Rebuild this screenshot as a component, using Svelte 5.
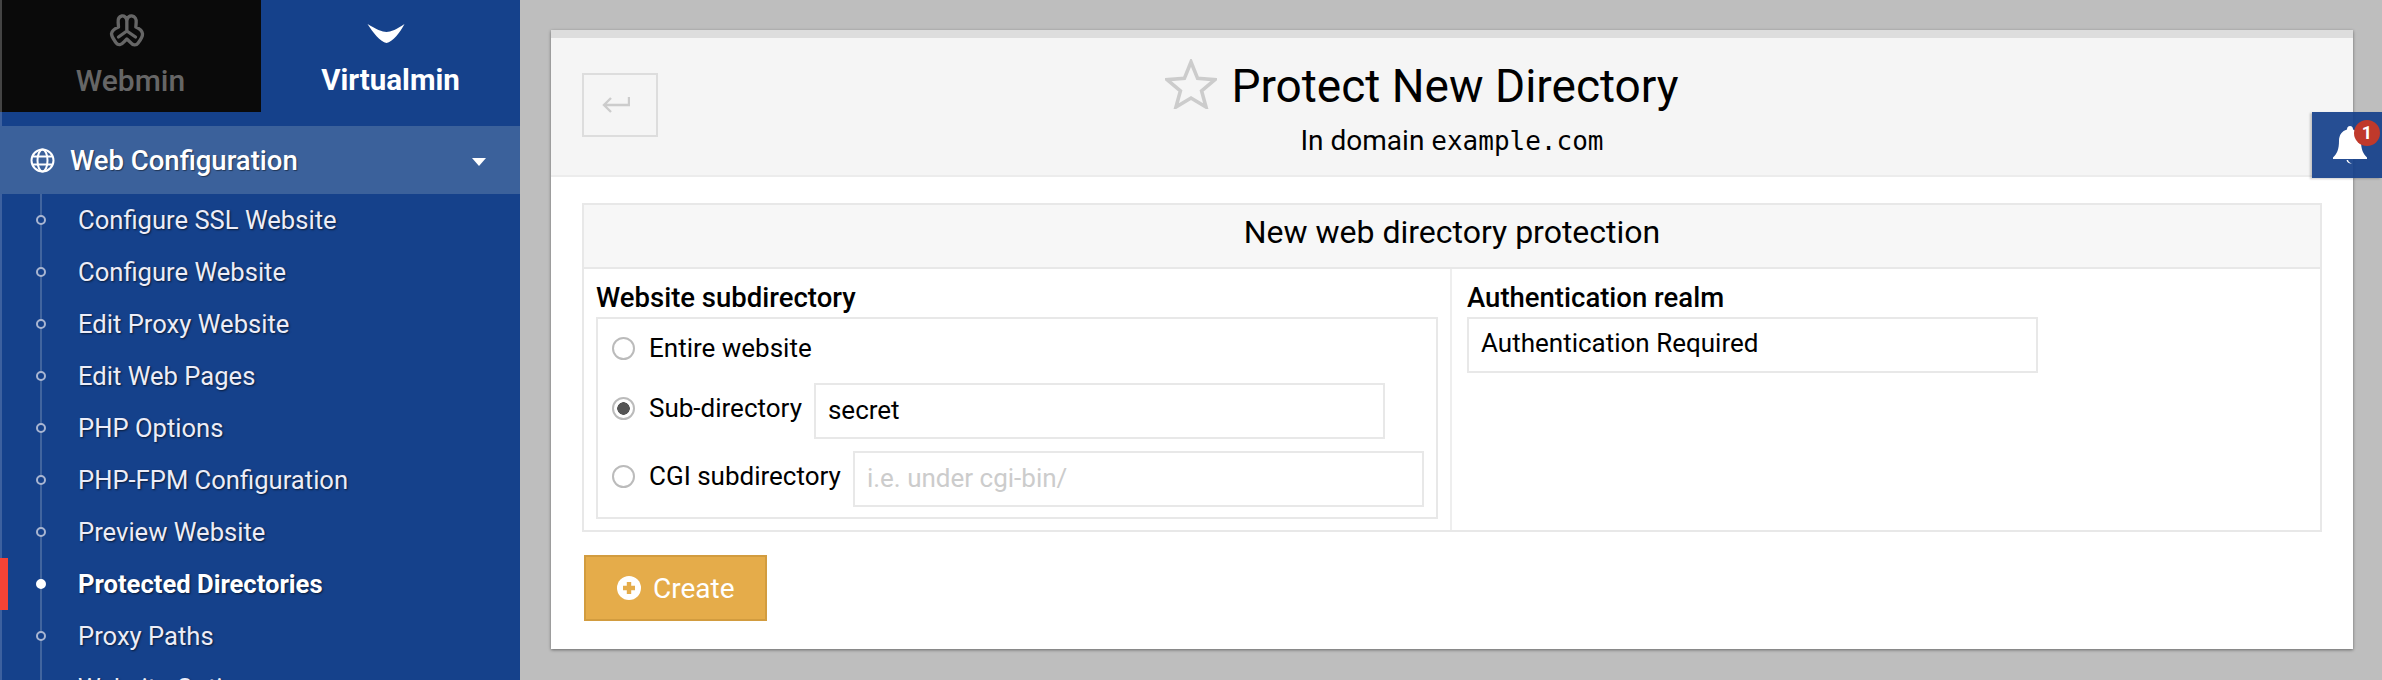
<script>
  let items = [
    'Configure SSL Website',
    'Configure Website',
    'Edit Proxy Website',
    'Edit Web Pages',
    'PHP Options',
    'PHP-FPM Configuration',
    'Preview Website',
    'Protected Directories',
    'Proxy Paths',
    'Website Options'
  ];
  let active = 'Protected Directories';
  let subdir = 'secret';
  let realm = 'Authentication Required';
  let mode = 'sub';
</script>

<div class="page">
  <aside class="sidebar">
    <div class="tabs">
      <div class="tab webmin">
        <svg class="webmin-logo" viewBox="85 40 110 105" fill="none" stroke="currentColor" stroke-width="10" stroke-linejoin="round" stroke-linecap="round">
          <path d="M138 60C134 50 128 48 123 49C114 51 111 58 112 68L113 82C104 86 93 92 92 102C92 112 100 120 106 130C112 138 122 136 128 128L138 118L150 129C156 137 166 138 172 130C178 122 186 112 185 102C184 92 174 86 165 82L166 68C167 58 162 50 154 49C148 48 142 50 138 60Z" />
          <path d="M138 60V94L113 112M138 94L164 112" />
        </svg>
        <span>Webmin</span>
      </div>
      <div class="tab virtualmin">
        <svg class="virtualmin-logo" viewBox="0 0 37 19">
          <path d="M0 0C8 5 15 8 19 8C23 8 30 5 37 0C33 8 25 18 19 19C13 18 5 8 0 0Z" fill="#fff" />
        </svg>
        <span>Virtualmin</span>
      </div>
    </div>

    <div class="section">
      <svg class="globe" viewBox="0 0 25 25" fill="none" stroke="#fff" stroke-width="2">
        <circle cx="12.5" cy="12.5" r="11" />
        <ellipse cx="12.5" cy="12.5" rx="5" ry="11" />
        <path d="M2.5 8.5H22.5M2.5 16.5H22.5" />
      </svg>
      <span class="section-name">Web Configuration</span>
      <span class="caret"></span>
    </div>

    <ul class="menu">
      {#each items as item}
        <li class:active={item === active}>
          <span class="dot"></span>
          <span>{item}</span>
        </li>
      {/each}
    </ul>
  </aside>

  <main class="main">
    <div class="card">
      <header class="card-head">
        <button class="back" aria-label="Back">
          <svg viewBox="0 0 28 18" fill="none" stroke="#ccc" stroke-width="2.4">
            <path d="M27 1V9H2M9 2L2 9L9 16" />
          </svg>
        </button>
        <div class="titles">
          <div class="title-row">
            <svg class="star" viewBox="0 0 52 50" fill="none" stroke="#ccc" stroke-width="3.6" stroke-linejoin="miter">
              <path d="M26 3L32.6 19.4L50 20.6L36.6 32L41 48L26 39L11 48L15.4 32L2 20.6L19.4 19.4Z" />
            </svg>
            <h1>Protect New Directory</h1>
          </div>
          <p class="subtitle">In domain <tt>example.com</tt></p>
        </div>
      </header>

      <div class="card-body">
        <section class="table">
          <div class="table-head">New web directory protection</div>
          <div class="table-row">
            <div class="cell left">
              <h2>Website subdirectory</h2>
              <div class="choices">
                <label class="choice first">
                  <input type="radio" name="dir" value="all" bind:group={mode}>
                  <span>Entire website</span>
                </label>
                <label class="choice">
                  <input class="lift" type="radio" name="dir" value="sub" bind:group={mode}>
                  <span class="lift">Sub-directory</span>
                  <input class="text" type="text" bind:value={subdir}>
                </label>
                <label class="choice">
                  <input class="lift" type="radio" name="dir" value="cgi" bind:group={mode}>
                  <span class="lift">CGI subdirectory</span>
                  <input class="text" type="text" placeholder="i.e. under cgi-bin/">
                </label>
              </div>
            </div>
            <div class="cell right">
              <h2>Authentication realm</h2>
              <input class="text realm" type="text" bind:value={realm}>
            </div>
          </div>
        </section>

        <button class="create">
          <svg viewBox="0 0 24 24">
            <circle cx="12" cy="12" r="12" fill="#fff" />
            <path d="M12 6V18M6 12H18" stroke="#e5ac4a" stroke-width="4.4" />
          </svg>
          Create
        </button>
      </div>
    </div>
  </main>

  <div class="bell">
    <svg viewBox="0 0 34 38">
      <path d="M17 0C19 0 20 1.500 20 3.500C25 5 28 9 28 15C28 23 30 28 34 31.500V33H0V31.500C4 28 6 23 6 15C6 9 9 5 14 3.500C14 1.500 15 0 17 0Z" fill="#fff" />
      <path d="M13.500 34C14 36.500 16 38 19 37.500C17 37 15.500 36 15 34Z" fill="#fff" />
    </svg>
    <span class="badge">1</span>
  </div>
</div>

<style>
  :global(body) {
    margin: 0;
    background: #bebebe;
  }

  .page {
    display: flex;
    position: relative;
    width: 2382px;
    height: 680px;
    overflow: hidden;
    font-family: Roboto, sans-serif;
    color: #000;
    background: #bebebe;
  }

  .sidebar {
    flex: 0 0 520px;
    height: 680px;
    overflow: hidden;
    background: #15418b;
    box-shadow: inset 2px 0 0 #3d619f;
    color: #fff;
  }

  .tabs {
    display: flex;
    height: 126px;
  }

  .tab {
    flex: 1;
    display: flex;
    flex-direction: column;
    align-items: center;
    line-height: 33px;
  }

  .webmin {
    height: 112px;
    background: #0a0a0a;
    color: #666;
    border-left: 2px solid #444;
    box-sizing: border-box;
    font-size: 30px;
    font-weight: 500;
  }

  .webmin span {
    margin-top: 16px;
    margin-right: 2px;
  }

  .webmin-logo {
    width: 37px;
    height: 35px;
    margin-top: 13px;
    margin-right: 8px;
  }

  .virtualmin {
    font-size: 29.5px;
    font-weight: 700;
  }

  .virtualmin span {
    margin-top: 21px;
  }

  .virtualmin-logo {
    width: 38px;
    height: 19px;
    margin-top: 24px;
    margin-right: 10px;
  }

  .section {
    display: flex;
    align-items: center;
    height: 68px;
    padding-left: 30px;
    padding-right: 34px;
    background: #3b619b;
    font-size: 27.5px;
    font-weight: 500;
    text-shadow: 1px 1px 1px rgba(0, 0, 0, 0.45);
  }

  .globe {
    width: 25px;
    height: 25px;
    margin-right: 15px;
  }

  .section-name {
    flex: 1;
  }

  .caret {
    width: 0;
    height: 0;
    border-left: 7px solid transparent;
    border-right: 7px solid transparent;
    border-top: 8px solid #fff;
    margin-top: 3px;
  }

  .menu {
    list-style: none;
    margin: 0;
    padding: 0;
    background: linear-gradient(#41659f, #41659f) 40px 0 / 2px 100% no-repeat;
  }

  .menu li {
    display: flex;
    align-items: center;
    height: 52px;
    padding-left: 36px;
    font-size: 25.6px;
    color: #ecedf8;
    text-shadow: 1px 1px 2px rgba(0, 0, 0, 0.6);
  }

  .dot {
    box-sizing: border-box;
    width: 10px;
    height: 10px;
    margin-right: 32px;
    border-radius: 50%;
    border: 2px solid #a9b6d2;
    background: #15418b;
  }

  .menu li.active {
    color: #fff;
    font-weight: 700;
    box-shadow: inset 8px 0 0 #f44336;
  }

  .active .dot {
    background: #fff;
    border-color: #fff;
  }

  .main {
    flex: 1;
    padding: 30px 29px 0 31px;
  }

  .card {
    background: #fff;
    border-top: 8px solid #ddd;
    height: 619px;
    box-sizing: border-box;
    box-shadow: 0 1px 3px rgba(0, 0, 0, 0.45);
  }

  .card-head {
    display: grid;
    grid-template-columns: 76px 1fr 76px;
    height: 139px;
    box-sizing: border-box;
    padding: 35px 31px 0;
    background: #f5f5f5;
    border-bottom: 2px solid #ececec;
  }

  .back {
    width: 76px;
    height: 64px;
    padding: 0 0 0 18px;
    background: transparent;
    border: 2px solid #ddd;
    display: flex;
    align-items: center;
  }

  .back svg {
    width: 28px;
    height: 18px;
  }

  .titles {
    text-align: center;
    margin-top: -21px;
  }

  .title-row {
    display: flex;
    justify-content: center;
    align-items: center;
    height: 68px;
    padding-left: 6px;
  }

  .star {
    width: 52px;
    height: 50px;
    margin-left: -66px;
    margin-right: 14px;
    margin-bottom: 4px;
  }

  h1 {
    margin: 0;
    font-size: 46px;
    font-weight: 400;
    line-height: 60px;
  }

  .subtitle {
    margin: 5px 0 0;
    font-size: 28px;
    line-height: 32px;
  }

  tt {
    font-family: "DejaVu Sans Mono", monospace;
    font-size: 26px;
  }

  .card-body {
    padding: 26px 31px 0;
  }

  .table {
    border: 2px solid #e8e8e8;
  }

  .table-head {
    box-sizing: border-box;
    height: 64px;
    line-height: 55px;
    text-align: center;
    font-size: 32px;
    background: #f7f7f7;
    border-bottom: 2px solid #e8e8e8;
  }

  .table-row {
    display: flex;
    height: 261px;
  }

  .cell {
    box-sizing: border-box;
    padding: 15px 12px 0;
  }

  .left {
    flex: 0 0 868px;
    border-right: 2px solid #eee;
  }

  .right {
    flex: 1;
    padding-left: 15px;
  }

  h2 {
    margin: 0 0 5px;
    font-size: 27.5px;
    font-weight: 500;
    line-height: 28px;
  }

  .choices {
    box-sizing: border-box;
    height: 202px;
    border: 2px solid #e8e8e8;
    padding-left: 14px;
  }

  .choice {
    display: flex;
    align-items: center;
    margin-bottom: 12px;
    font-size: 26px;
  }

  .choice.first {
    height: 52px;
    padding-top: 3px;
    margin-bottom: 9px;
  }

  .lift {
    margin-top: -6px;
  }

  input[type="radio"] {
    appearance: none;
    flex: none;
    box-sizing: border-box;
    width: 23px;
    height: 23px;
    margin-right: 14px;
    margin-left: 0;
    margin-bottom: 0;
    border: 2px solid #bbb;
    border-radius: 50%;
    background: #fff;
  }

  input[type="radio"]:not(.lift) {
    margin-top: 0;
  }

  input[type="radio"]:checked {
    background: radial-gradient(circle, #555 0 6px, #fff 6.5px);
  }

  .text {
    box-sizing: border-box;
    width: 571px;
    height: 56px;
    margin-left: 12px;
    padding: 0 12px 2px;
    border: 2px solid #e8e8e8;
    border-radius: 0;
    outline: none;
    font-family: Roboto, sans-serif;
    font-size: 26px;
    color: #000;
    background: #fff;
  }

  .text::placeholder {
    color: #ccc;
  }

  .realm {
    display: block;
    margin-left: 0;
    padding-bottom: 4px;
  }

  .create {
    display: flex;
    align-items: center;
    gap: 12px;
    box-sizing: border-box;
    width: 183px;
    height: 66px;
    margin: 23px 0 0 2px;
    padding: 0 0 0 31px;
    background: #e5ac4a;
    border: 2px solid #d29c3f;
    color: #fff;
    font-family: Roboto, sans-serif;
    font-size: 28px;
  }

  .create svg {
    width: 24px;
    height: 24px;
  }

  .bell {
    position: absolute;
    left: 2312px;
    top: 112px;
    width: 70px;
    height: 66px;
    background: rgba(21, 65, 139, 0.93);
    box-shadow: -2px 1px 2px rgba(0, 0, 0, 0.2);
  }

  .bell svg {
    position: absolute;
    left: 21px;
    top: 14px;
    width: 34px;
    height: 38px;
  }

  .badge {
    position: absolute;
    left: 42px;
    top: 8px;
    width: 26px;
    height: 26px;
    border-radius: 50%;
    background: #c0392b;
    color: #fff;
    font-size: 18px;
    font-weight: 700;
    line-height: 26px;
    text-align: center;
  }
</style>
